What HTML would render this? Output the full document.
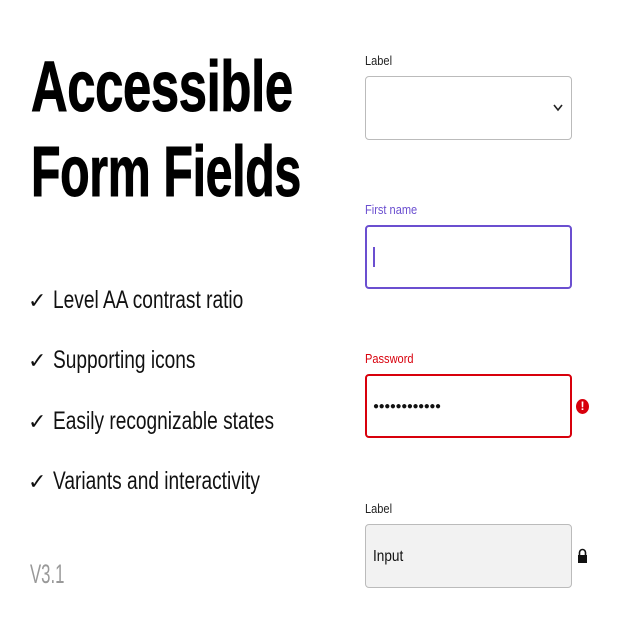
<!DOCTYPE html>
<html><head><meta charset="utf-8"><style>
body{margin:0;width:640px;height:640px;background:#fff;position:relative;overflow:hidden;font-family:"Liberation Sans",sans-serif;color:#111}
.a{position:absolute;white-space:nowrap;line-height:1;transform-origin:0 0}
.t{font-weight:bold;font-size:71px;letter-spacing:-0.5px;-webkit-text-stroke:1px #000;color:#000}
.c{font-size:25px;transform:scaleX(0.765);left:53px}
.k{font-size:22px;left:28px}
.l{font-size:13px;left:365px;transform:scaleX(0.85)}
.b{position:absolute;left:365px;width:207px;height:64px;box-sizing:border-box;border-radius:4px}
</style></head><body>
<div class="a t" style="left:31px;top:52px;transform:scaleX(0.715)">Accessible</div>
<div class="a t" style="left:31px;top:137px;transform:scaleX(0.68)">Form Fields</div>
<div class="a k" style="top:290px">✓</div><div class="a c" style="top:288px">Level AA contrast ratio</div>
<div class="a k" style="top:350px">✓</div><div class="a c" style="top:348px">Supporting icons</div>
<div class="a k" style="top:411px">✓</div><div class="a c" style="top:409px">Easily recognizable states</div>
<div class="a k" style="top:471px">✓</div><div class="a c" style="top:469px">Variants and interactivity</div>
<div class="a" style="left:30px;top:561px;font-size:27px;color:#999;transform:scaleX(0.62)">V3.1</div>

<div class="a l" style="top:54px;color:#222">Label</div>
<div class="b" style="top:76px;border:1px solid #bbb"></div>
<svg style="position:absolute;left:552px;top:103px" width="12" height="9" viewBox="0 0 12 9"><path d="M2 2 L6 7 L10 2" fill="none" stroke="#222" stroke-width="1.6"/></svg>

<div class="a l" style="top:203px;color:#6b4fd0">First name</div>
<div class="b" style="top:225px;border:2px solid #6b4fd0"></div>
<div style="position:absolute;left:373px;top:247px;width:1.5px;height:20px;background:#6b4fd0"></div>

<div class="a l" style="top:352px;color:#d8000c">Password</div>
<div class="b" style="top:374px;border:2px solid #d8000c"></div>
<div class="a" style="left:373px;top:402px;font-size:10px;letter-spacing:-0.4px">●●●●●●●●●●●●</div>
<div style="position:absolute;left:576px;top:399px;width:13px;height:15px;border-radius:50%;background:#d8000c;color:#fff;font-weight:bold;font-size:12px;line-height:15px;text-align:center">!</div>

<div class="a l" style="top:502px;color:#222">Label</div>
<div class="b" style="top:524px;border:1px solid #bbb;background:#f2f2f2"></div>
<div class="a" style="left:373px;top:549px;font-size:16px;transform:scaleX(0.85)">Input</div>
<svg style="position:absolute;left:577px;top:548px" width="11" height="16" viewBox="0 0 11 16"><path d="M2.5 7 V4.5 a3 3 0 0 1 6 0 V7" fill="none" stroke="#111" stroke-width="1.6"/><rect x="1" y="7" width="9" height="8" fill="#111"/></svg>
</body></html>
